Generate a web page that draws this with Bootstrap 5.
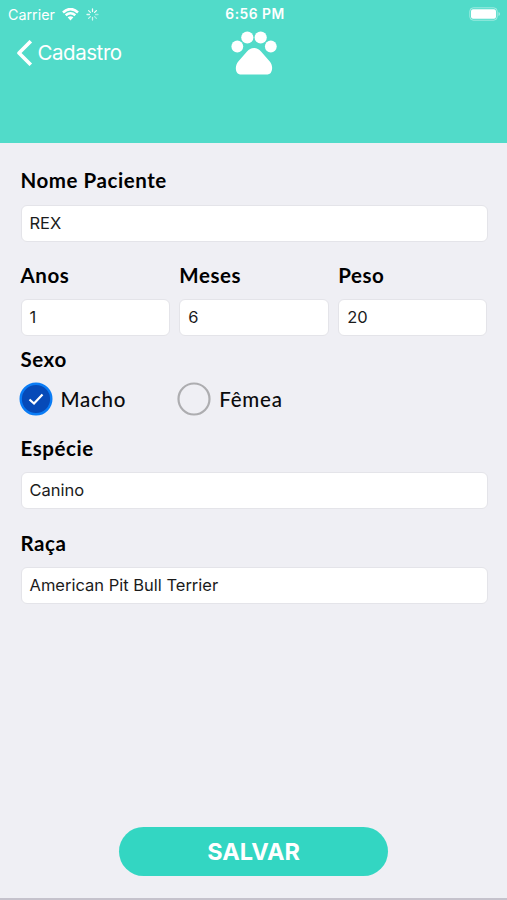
<!DOCTYPE html>
<html lang="pt-BR">
<head>
<meta charset="utf-8">
<meta name="viewport" content="width=device-width, initial-scale=1">
<title>Cadastro</title>
<link href="https://cdn.jsdelivr.net/npm/bootstrap@5.3.0/dist/css/bootstrap.min.css" rel="stylesheet">
<style>
body { background: #efeff4; color: #0b0b0c; font-family: Inter, "Liberation Sans", sans-serif; }
.screen { height: 900px; border-bottom: 2px solid #c5c2cc; }
.app-head { height: 142.5px; background: #51dbc9; color: #fff; }
.status { height: 27px; font-size: 14.3px; line-height: 27px; padding: 0 6px 0 8px; }
.status .time { font-weight: 600; font-size: 13.8px; letter-spacing: .5px; padding: 1px 0 0 1px; }
.status .icons { gap: 7px; }
.title-row { height: 51px; }
.back { font-size: 20.5px; letter-spacing: -.45px; gap: 5px; padding-top: 1px; }
.back svg { margin-left: 15.5px; }
.form-area { padding: 20.5px 19.5px 0 20.5px; }
.lbl { font: 700 20.5px/36px Lato, sans-serif; letter-spacing: .55px; height: 36px; margin-bottom: 6px; color: #000; }
.first-lbl { line-height: 35px; }
.field { height: 37px; border: 1px solid #e4e4e9; border-radius: 6px; padding: 0 8px 1px; font-size: 16.5px; letter-spacing: 0; color: #1b1b1b; }
.block-gap { margin-bottom: 15px; }
.tail-gap { margin-bottom: 16px; }
.sex-lbl { margin-top: 5px; }
.tri { display: grid; grid-template-columns: repeat(3, 1fr); column-gap: 9.5px; }
.sex-row { margin: -1px 0 14px; }
.opt { font: 500 20.5px/34px Lato, sans-serif; letter-spacing: .75px; gap: 8px; margin-left: -2px; }
.save { width: 269px; height: 49px; background: #33d6c2; color: #fff; font-size: 23.5px; font-weight: 700; margin-bottom: 22px; }
.save:hover { background: #2cc7b4; color: #fff; }
</style>
<script src="https://cdn.jsdelivr.net/npm/bootstrap@5.3.0/dist/js/bootstrap.bundle.min.js"></script>
</head>
<body>
<div class="screen d-flex flex-column">
  <header class="app-head">
    <div class="status row g-0">
      <div class="icons col d-flex align-items-center">
        <span>Carrier</span>
        <svg width="17" height="13" viewBox="0 0 17 13" fill="none" stroke="#fff" stroke-width="2.600"><path d="M1 4.400Q8.500-2.200 16 4.400M3.700 7.300Q8.500 3.200 13.300 7.300"/><path d="M5.600 9.300Q8.500 7 11.400 9.300L8.500 12.400Z" fill="#fff" stroke="none"/></svg>
        <svg width="13" height="13" viewBox="-6.500 -6.500 13 13" stroke="#fff" stroke-width="1.300" stroke-linecap="round"><path d="M0-3V-5.500M2.100-2.100L3.900-3.900" opacity=".95"/><path d="M3 0H5.500M2.100 2.100L3.900 3.900" opacity=".5"/><path d="M0 3V5.500M-2.100 2.100L-3.900 3.900" opacity=".7"/><path d="M-3 0H-5.500M-2.100-2.100L-3.900-3.900" opacity=".85"/></svg>
      </div>
      <div class="col-auto time">6:56 PM</div>
      <div class="col d-flex align-items-center justify-content-end">
        <svg width="32" height="14" viewBox="0 0 32 14"><rect x=".8" y=".8" width="27.400" height="12.400" rx="3.500" fill="none" stroke="#fff" stroke-opacity=".45"/><rect x="2" y="2.200" width="25" height="9.600" rx="2" fill="#fff"/><path d="M29.500 5V9Q31 8.500 31 7T29.500 5" fill="#fff" fill-opacity=".5"/></svg>
      </div>
    </div>
    <div class="title-row row g-0 align-items-center">
      <div class="col back d-flex align-items-center">
        <svg width="17" height="26" viewBox="0 0 17 26" fill="none" stroke="#fff" stroke-width="3.600" stroke-linejoin="round"><path d="M14.800 1.200L3 13L14.800 24.800"/></svg>
        <span>Cadastro</span>
      </div>
      <div class="col-auto">
        <svg class="d-block" width="46" height="44" viewBox="0 0 46 44" fill="#fff"><circle cx="6.300" cy="15.500" r="5.900"/><circle cx="16.300" cy="6.500" r="6.100"/><circle cx="29.700" cy="6.500" r="6.100"/><circle cx="39.800" cy="15.500" r="5.900"/><path d="M23 17C26 17 28 18.200 30 20.500L39 30.800C41.500 34 41.800 38.500 40 41.500C39 43 37.500 43.500 35 43.500H10.500C8.500 43.500 6.500 43 5.600 41C4 37.500 5 33 7.500 30.200L16 20.500C18 18.200 20 17 23 17Z"/></svg>
      </div>
      <div class="col"></div>
    </div>
  </header>

  <main class="form-area flex-grow-1">
    <div class="block-gap">
      <div class="lbl first-lbl">Nome Paciente</div>
      <div class="field bg-white d-flex align-items-center">REX</div>
    </div>
    <div class="tri">
      <div><div class="lbl">Anos</div><div class="field bg-white d-flex align-items-center">1</div></div>
      <div><div class="lbl">Meses</div><div class="field bg-white d-flex align-items-center">6</div></div>
      <div><div class="lbl">Peso</div><div class="field bg-white d-flex align-items-center">20</div></div>
    </div>
    <div class="lbl sex-lbl">Sexo</div>
    <div class="tri sex-row">
      <div class="opt d-flex align-items-center">
        <svg width="34" height="34" viewBox="0 0 34 34"><circle cx="17" cy="17" r="15.300" fill="#064ab8" stroke="#0a7cf5" stroke-width="2.400"/><path d="M10.500 17.500L15 21.500L23.500 12.500" fill="none" stroke="#fff" stroke-width="2.200"/></svg>
        <span>Macho</span>
      </div>
      <div class="opt d-flex align-items-center">
        <svg width="34" height="34" viewBox="0 0 34 34"><circle cx="17" cy="17" r="15.500" fill="none" stroke="#adadb0" stroke-width="2.200"/></svg>
        <span>Fêmea</span>
      </div>
    </div>
    <div class="tail-gap">
      <div class="lbl">Espécie</div>
      <div class="field bg-white d-flex align-items-center">Canino</div>
    </div>
    <div>
      <div class="lbl">Raça</div>
      <div class="field bg-white d-flex align-items-center">American Pit Bull Terrier</div>
    </div>
  </main>

  <button type="button" class="save btn border-0 rounded-pill mx-auto p-0">SALVAR</button>
</div>
</body>
</html>
